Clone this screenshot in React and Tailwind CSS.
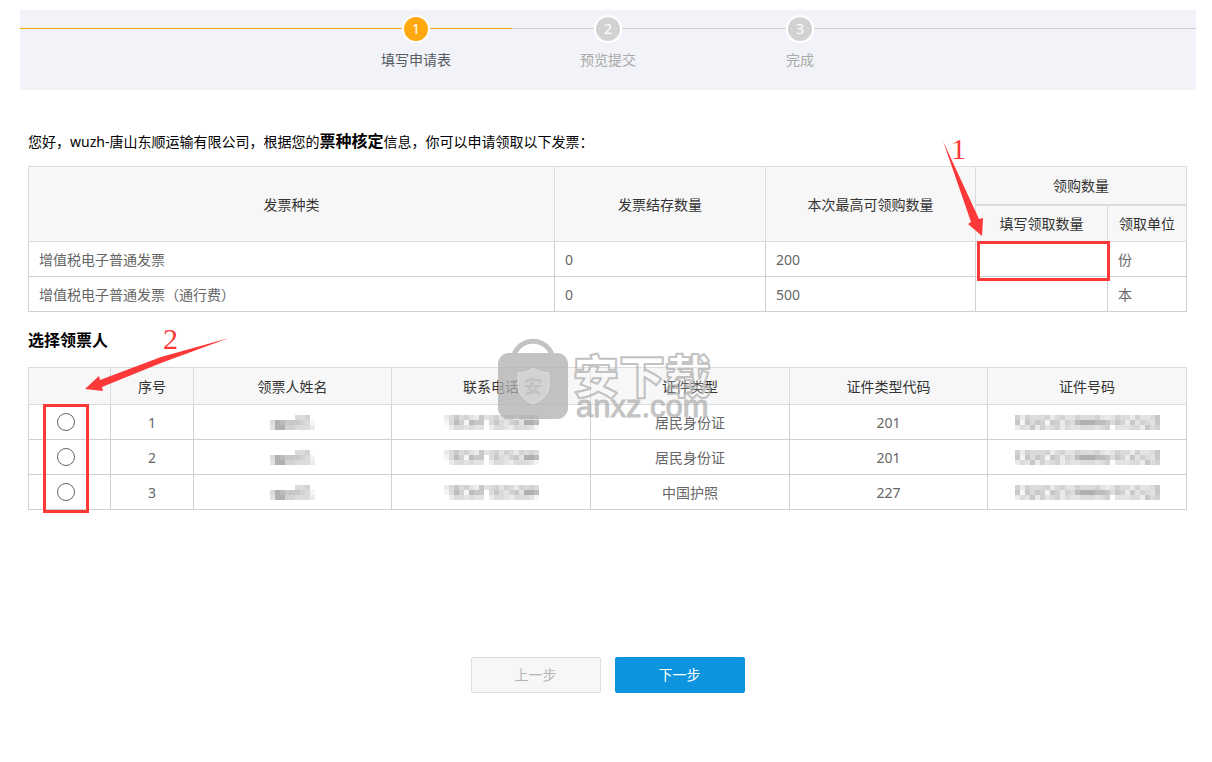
import React, { useState } from 'react';

const STEPS = ['填写申请表', '预览提交', '完成'];

const INVOICES = [
  { id: 'dzpp', name: '增值税电子普通发票', stock: 0, max: 200, unit: '份' },
  { id: 'dztx', name: '增值税电子普通发票（通行费）', stock: 0, max: 500, unit: '本' },
];

const RECEIVERS = [
  { id: 1, type: '居民身份证', code: '201' },
  { id: 2, type: '居民身份证', code: '201' },
  { id: 3, type: '中国护照', code: '227' },
];

// one letter per 5px block, "a" is the lightest grey and "h" the darkest
const SHADES = {
  a: '#f5f5f5',
  b: '#ebebeb',
  c: '#e3e3e3',
  d: '#dbdbdb',
  e: '#d2d2d2',
  f: '#c8c8c8',
  g: '#bcbcbc',
  h: '#b0b0b0',
};

const MASKED_NAME = ['.....dde', 'dhgfffeda', 'chheedddb'];
const MASKED_PHONE = ['bdfdecbfcdecedbeded', 'adgeagff.dfdcefchhg', '.bddcdcc.bddcbdddca'];
const MASKED_ID = [
  'ebedddebdeccedddecbceddbeccdf',
  'fafdfeafebedghhhggfdfebfcedcf',
  'bdcfbecdebdccdddcde.cccddbfde',
];

function Mosaic({ rows, label }) {
  const width = Math.max(...rows.map((row) => row.length)) * 5;
  return (
    <svg
      width={width}
      height="15"
      viewBox={`0 0 ${width} 15`}
      shapeRendering="crispEdges"
      role="img"
      aria-label={label}
      className="mx-auto block"
    >
      {rows.map((row, y) =>
        row.split('').map((c, x) =>
          SHADES[c] ? (
            <rect key={`${x}-${y}`} x={x * 5} y={y * 5} width="5" height="5" fill={SHADES[c]} />
          ) : null
        )
      )}
    </svg>
  );
}

function Stepper({ current }) {
  return (
    <div className="relative ml-5 mr-4 h-20 bg-[#f2f3f8]">
      <div className="absolute inset-x-0 top-[18px] h-px bg-[#d2d2d2]" />
      <div className="absolute left-0 top-[18px] h-px w-[calc(50%-96px)] bg-[#ffa810]" />
      <ol className="relative flex justify-center pt-[5px]">
        {STEPS.map((step, i) => (
          <li key={step} className="flex w-48 flex-col items-center">
            <span
              className={`flex h-7 w-7 items-center justify-center rounded-full border-2 border-white text-sm text-white ${
                i === current ? 'bg-[#ffa810]' : 'bg-[#d2d2d2]'
              }`}
            >
              {i + 1}
            </span>
            <span
              className={`mt-[7px] text-sm leading-5 ${i === current ? 'text-[#555b62]' : 'text-[#a9a9a9]'}`}
            >
              {step}
            </span>
          </li>
        ))}
      </ol>
    </div>
  );
}

function Th({ className = '', ...props }) {
  return (
    <th
      className={`border border-[#dcdcdc] bg-[#f7f7f7] p-0 pt-0.5 text-center font-normal text-[#333] ${className}`}
      {...props}
    />
  );
}

function Td({ className = '', ...props }) {
  return <td className={`border border-[#d0d0d0] p-0 ${className}`} {...props} />;
}

function InvoiceTable() {
  const [counts, setCounts] = useState({});

  return (
    <div className="relative">
      <table className="w-full table-fixed border-collapse text-sm leading-5 text-[#666]">
        <colgroup>
          <col className="w-[526px]" />
          <col className="w-[211px]" />
          <col className="w-[210px]" />
          <col className="w-[132px]" />
          <col className="w-[79px]" />
        </colgroup>
        <thead>
          <tr className="h-[38px]">
            <Th rowSpan={2}>发票种类</Th>
            <Th rowSpan={2}>发票结存数量</Th>
            <Th rowSpan={2}>本次最高可领购数量</Th>
            <Th colSpan={2}>领购数量</Th>
          </tr>
          <tr className="h-[37px]">
            <Th className="border-t-2">填写领取数量</Th>
            <Th className="border-t-2">领取单位</Th>
          </tr>
        </thead>
        <tbody>
          {INVOICES.map((item, i) => (
            <tr key={item.id} className="h-[35px]">
              <Td className="pl-[10px] pt-0.5">{item.name}</Td>
              <Td className="pl-[10px] pt-0.5">{item.stock}</Td>
              <Td className="pl-[10px] pt-0.5">{item.max}</Td>
              <Td className="relative">
                <input
                  type="text"
                  aria-label={`${item.name} 填写领取数量`}
                  value={counts[item.id] || ''}
                  onChange={(e) => setCounts({ ...counts, [item.id]: e.target.value })}
                  className="block h-[30px] w-full bg-transparent px-[10px] outline-none"
                />
                {i === 0 && (
                  <div className="pointer-events-none absolute -bottom-[5px] -right-[3px] -top-px left-px border-3 border-[#fd3838]" />
                )}
              </Td>
              <Td className="pl-[10px] pt-0.5">{item.unit}</Td>
            </tr>
          ))}
        </tbody>
      </table>

      <svg
        width="60"
        height="110"
        viewBox="0 0 60 110"
        className="pointer-events-none absolute -top-[31px] right-[196px]"
        aria-hidden="true"
      >
        <path d="M12 6 L40 87 L37 89 L51 101 L52 83 L48 84 Z" fill="#fd3838" />
      </svg>
      <span className="pointer-events-none absolute -top-[33px] right-[221px] font-['Liberation_Serif',serif] text-[30px] leading-8 text-[#fd3838]">
        1
      </span>
    </div>
  );
}

function Watermark() {
  return (
    <svg
      width="222"
      height="88"
      viewBox="0 0 222 88"
      className="pointer-events-none absolute -top-[30px] left-1/2 -translate-x-1/2"
      aria-hidden="true"
    >
      <g opacity="0.75">
        <path d="M17 18 A20 20 0 0 1 55 18" fill="none" stroke="#b0b0b0" strokeWidth="5" />
        <rect x="1" y="16" width="70" height="66" rx="11" fill="#b0b0b0" />
        <path
          d="M36 31 Q43 36 52 36 V50 Q51 61 36 67 Q22 61 21 50 V36 Q30 36 36 31 Z"
          fill="#c6c6c6"
          stroke="#d8d8d8"
          strokeWidth="1"
        />
        <text x="36" y="56" textAnchor="middle" fontSize="18" fontWeight="700" fill="#b0b0b0">
          安
        </text>
        <text
          x="76"
          y="56"
          fontSize="46"
          fontWeight="900"
          fill="#fff"
          fillOpacity="0.3"
          stroke="#b0b0b0"
          strokeWidth="2"
          strokeLinejoin="round"
        >
          安下载
        </text>
        <text
          x="79"
          y="80"
          fontSize="31"
          fill="#b0b0b0"
          stroke="#b0b0b0"
          strokeWidth="1"
          className="font-['Liberation_Sans',sans-serif]"
        >
          anxz.com
        </text>
      </g>
    </svg>
  );
}

function ReceiverTable() {
  const [selected, setSelected] = useState(null);

  return (
    <div className="relative">
      <table className="w-full table-fixed border-collapse text-center text-sm leading-5 text-[#666]">
        <colgroup>
          <col className="w-[82px]" />
          <col className="w-[83px]" />
          <col className="w-[198px]" />
          <col className="w-[199px]" />
          <col className="w-[199px]" />
          <col className="w-[198px]" />
          <col className="w-[199px]" />
        </colgroup>
        <thead>
          <tr className="h-[37px]">
            <Th />
            <Th>序号</Th>
            <Th>领票人姓名</Th>
            <Th>联系电话</Th>
            <Th>证件类型</Th>
            <Th>证件类型代码</Th>
            <Th>证件号码</Th>
          </tr>
        </thead>
        <tbody>
          {RECEIVERS.map((person) => (
            <tr key={person.id} className="h-[35px]">
              <Td>
                <input
                  type="radio"
                  name="receiver"
                  aria-label={`选择领票人 ${person.id}`}
                  checked={selected === person.id}
                  onChange={() => setSelected(person.id)}
                  className="mr-2 block h-[18px] w-[18px] appearance-none justify-self-center rounded-full border border-[#666] bg-white checked:border-[5px]"
                />
              </Td>
              <Td className="pt-0.5">{person.id}</Td>
              <Td>
                <Mosaic rows={MASKED_NAME} label="领票人姓名" />
              </Td>
              <Td>
                <Mosaic rows={MASKED_PHONE} label="联系电话" />
              </Td>
              <Td className="pt-0.5">{person.type}</Td>
              <Td className="pt-0.5">{person.code}</Td>
              <Td>
                <Mosaic rows={MASKED_ID} label="证件号码" />
              </Td>
            </tr>
          ))}
        </tbody>
      </table>

      <div className="pointer-events-none absolute -bottom-[3px] left-[15px] top-[37px] w-[46px] border-3 border-[#fd3838]" />
      <svg
        width="150"
        height="60"
        viewBox="0 0 150 60"
        className="pointer-events-none absolute -top-8 left-[55px]"
        aria-hidden="true"
      >
        <path d="M146 3 L78 22 L17 45 L16 41 L2 54 L20 56 L19 52 L78 28 Z" fill="#fd3838" />
      </svg>
      <span className="pointer-events-none absolute -top-11 left-[135px] font-['Liberation_Serif',serif] text-[30px] leading-8 text-[#fd3838]">
        2
      </span>
      <Watermark />
    </div>
  );
}

export default function App() {
  return (
    <div className="min-h-screen bg-white pb-16 pt-[10px] font-['Noto_Sans','Noto_Sans_CJK_SC',sans-serif] text-sm text-black">
      <Stepper current={0} />

      <main className="ml-7 mr-[25px] pt-[39px]">
        <p className="leading-6">
          您好，wuzh-唐山东顺运输有限公司，根据您的
          <strong className="text-base font-bold">票种核定</strong>
          信息，你可以申请领取以下发票：
        </p>
        <div className="mt-3">
          <InvoiceTable />
        </div>

        <h2 className="mb-[15px] mt-4 text-base font-bold leading-6">选择领票人</h2>
        <ReceiverTable />

        <div className="mt-[147px] flex justify-center gap-[14px]">
          <button
            type="button"
            disabled
            className="h-9 w-[130px] rounded-xs border border-[#dedede] bg-[#f7f7f7] text-[#b5b5b5]"
          >
            上一步
          </button>
          <button type="button" className="h-9 w-[130px] rounded-xs bg-[#0d94df] text-white">
            下一步
          </button>
        </div>
      </main>
    </div>
  );
}
